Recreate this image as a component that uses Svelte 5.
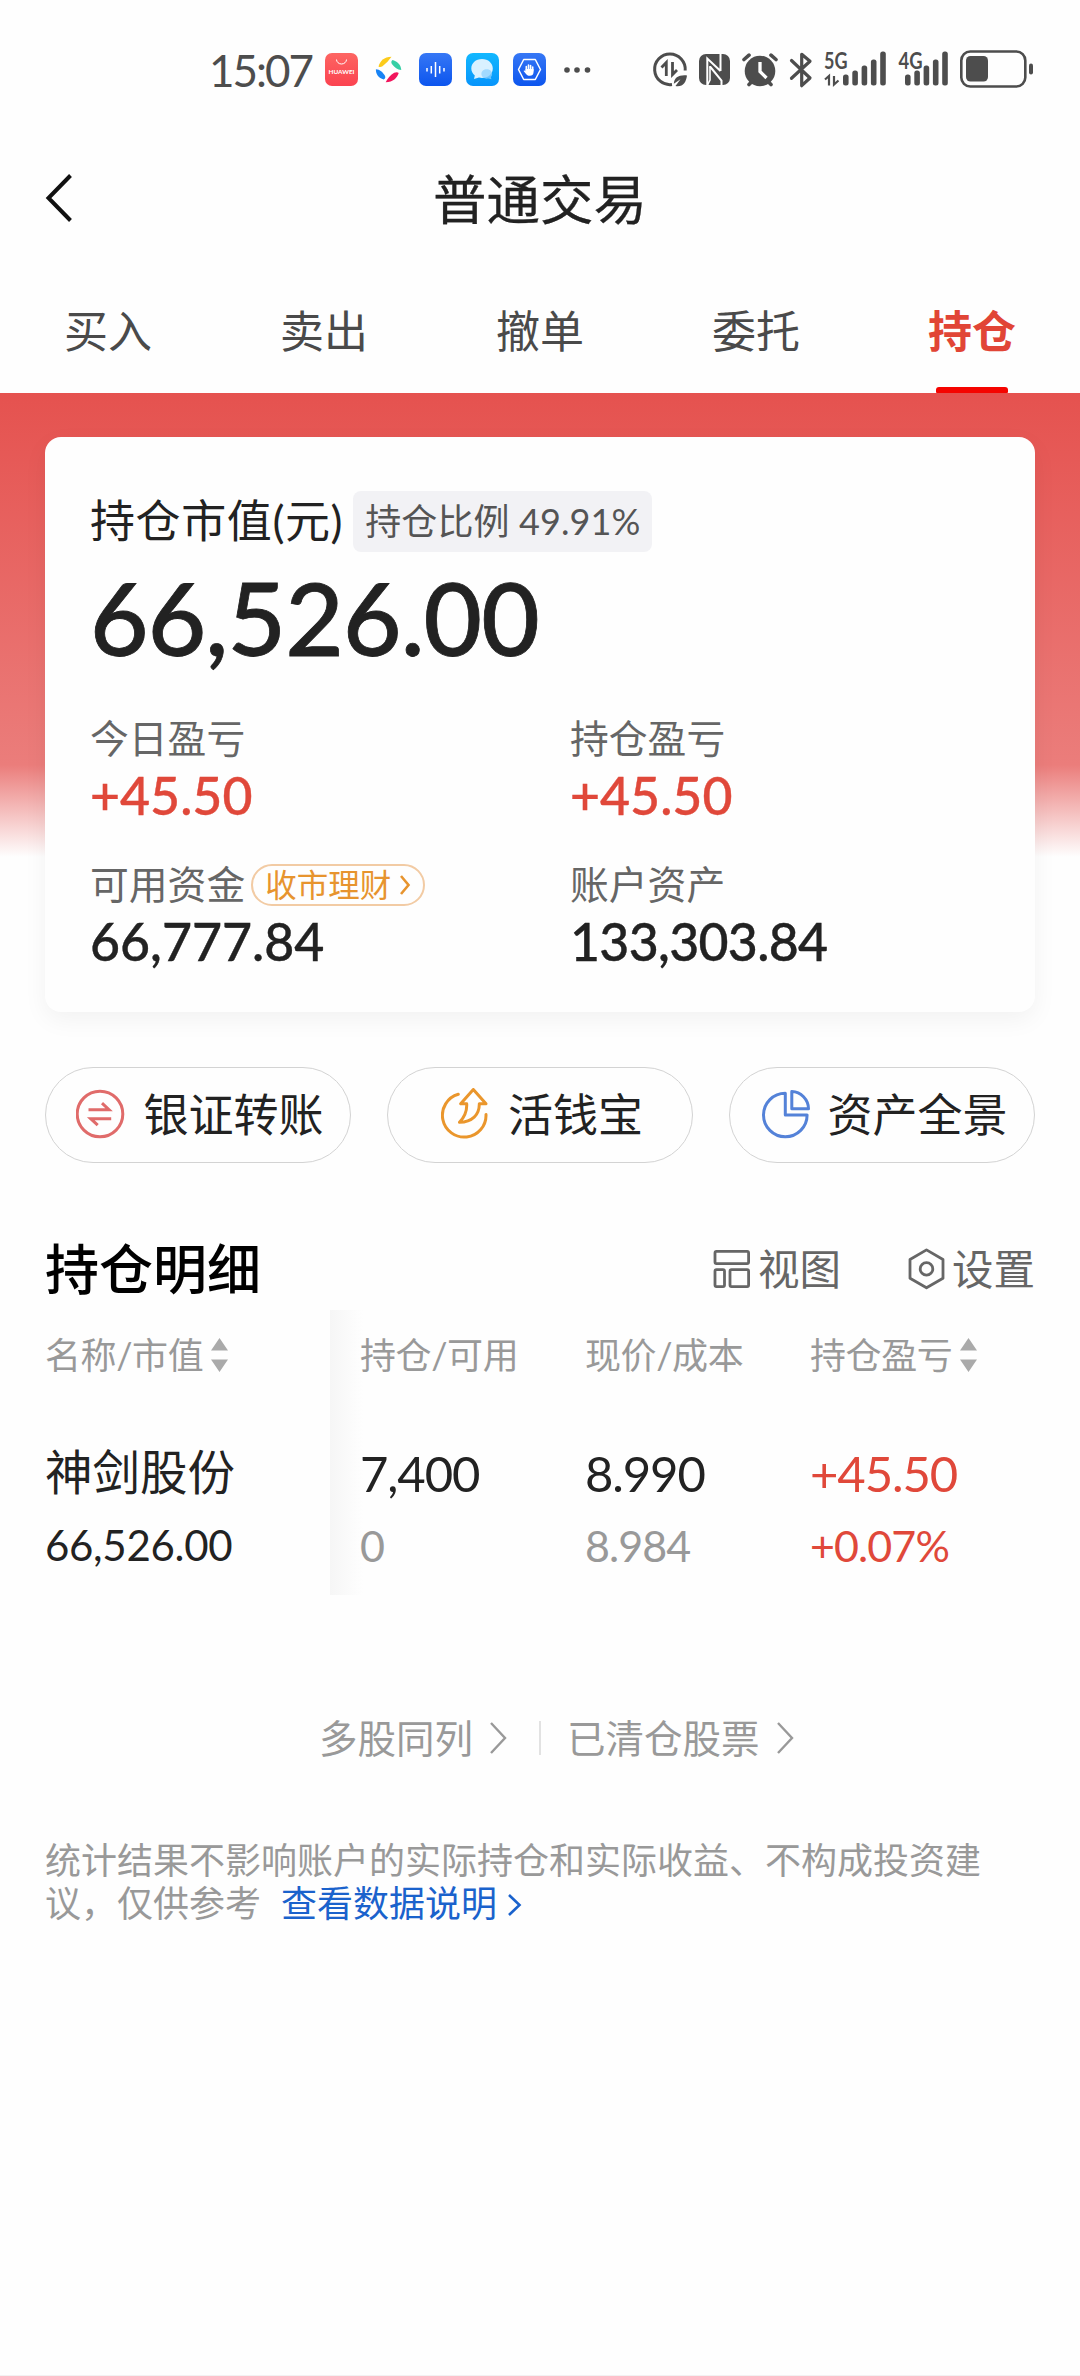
<script lang="ts">
  // Positions screen of the trading app: account summary card, quick actions
  // and the holdings table with its pinned first column.
  const tabs = ["买入", "卖出", "撤单", "委托", "持仓"];
  let active = $state("持仓");

  const signal5g = [11, 15, 20, 26, 34];
  const signal4g = [11, 15, 20, 26, 34];

  const holdings = [
    {
      name: "神剑股份",
      value: "66,526.00",
      held: "7,400",
      available: "0",
      price: "8.990",
      cost: "8.984",
      profit: "+45.50",
      ratio: "+0.07%",
    },
  ];
</script>

{#snippet sorter()}
  <svg class="sorter" width="20" height="34" viewBox="0 0 20 34">
    <path d="M9.500 0 18 12.500H1z M9.500 34 1 21.500h17z" fill="#aaa" />
  </svg>
{/snippet}

<div class="screen">
  <div class="status">
    <span class="clock">15:07</span>
    <div class="apps">
      <svg width="33" height="33" viewBox="0 0 33 33">
        <defs>
          <linearGradient id="store" x2="0" y2="1">
            <stop stop-color="#fd6562" />
            <stop offset="1" stop-color="#fb4350" />
          </linearGradient>
        </defs>
        <rect width="33" height="33" rx="7" fill="url(#store)" />
        <path d="M11.500 6.500a5 4.500 0 0 0 10 0" fill="none" stroke="#fff" stroke-width="1" />
        <text x="16.500" y="21" text-anchor="middle" textLength="26" lengthAdjust="spacingAndGlyphs" font-size="5.500" font-weight="700" fill="#fff">HUAWEI</text>
      </svg>
      <svg width="33" height="33" viewBox="0 0 33 33">
        <path d="M6.500 13.500C8 8 12 4 19.500 3.800l-4 5-5 4.500c-1.500 1-3 1-4 .2z" fill="#fccb1b" />
        <path d="M20.500 7c4 1 8.500 4 8.800 10-3.800-.2-6.800-2.400-9-5.400-1.400-1.800-1.300-3.600.2-4.600z" fill="#36cfa5" />
        <path d="M26.700 20c-1.500 5-5.700 9-13 9.300 1.500-3.500 4.300-7 8.500-9.500 1.800-.9 3.500-.9 4.500.2z" fill="#f2155c" />
        <path d="M3.900 16.200c4 0 7 3.200 8.800 6 1.200 2 .6 3.600-1 4.200-5-1.500-8-5.200-7.800-10.200z" fill="#1783f5" />
      </svg>
      <svg width="33" height="33" viewBox="0 0 33 33">
        <defs>
          <linearGradient id="blue" x2="0" y2="1">
            <stop stop-color="#3677f5" />
            <stop offset="1" stop-color="#0c55ee" />
          </linearGradient>
        </defs>
        <rect width="33" height="33" rx="7" fill="url(#blue)" />
        <path d="M8 15v3.500M12.300 13v7.500M16.500 9v15M20.700 13v7.500M25 15v3.500" stroke="#fff" stroke-width="1.500" />
      </svg>
      <svg width="33" height="33" viewBox="0 0 33 33">
        <defs>
          <linearGradient id="cyan" x2="0" y2="1">
            <stop stop-color="#12b8ff" />
            <stop offset="1" stop-color="#0794fb" />
          </linearGradient>
        </defs>
        <rect width="33" height="33" rx="7" fill="url(#cyan)" />
        <path d="M16 6c6.300 0 10.800 4.200 10.800 9.500S22.300 25 16 25c-1 0-2-.1-3-.4L8 26l.8-3.500C6.600 20.700 5.300 18.300 5.300 15.500 5.300 10.200 9.700 6 16 6z" fill="#d9f1ff" />
        <path d="M20.700 16.300c3 0 5.400 2 5.400 4.700 0 1.200-.5 2.300-1.300 3.100l.6 2.200-3-.8c-4 .8-7-1.500-7-4.500 0-2.700 2.400-4.700 5.300-4.700z" fill="#8fd2ff" opacity=".75" />
      </svg>
      <svg width="33" height="33" viewBox="0 0 33 33">
        <rect width="33" height="33" rx="7" fill="url(#blue)" />
        <path d="M10.700 6.500h11.600L27.500 16.500l-5.200 10H10.700l-5.200-10z" fill="none" stroke="#fff" stroke-width="1.500" stroke-linejoin="round" />
        <path d="M13.300 18v-4.500M15.500 17v-5M17.600 17v-4.500M19.700 18v-4" stroke="#fff" stroke-width="1.600" stroke-linecap="round" />
        <path d="M12.600 16h7.900v3.500c0 2-1.500 3.300-3.700 3.300-2 0-3-.8-4.200-2.300l-2-2.500c.7-.7 1.300-.5 2 .3z" fill="#fff" />
      </svg>
    </div>
    <svg class="more" width="28" height="8" viewBox="0 0 28 8" fill="#4d4d4d">
      <circle cx="4" cy="4" r="2.800" />
      <circle cx="14" cy="4" r="2.800" />
      <circle cx="24.500" cy="4" r="2.800" />
    </svg>

    <svg class="system" width="384" height="60" viewBox="0 -10 384 60" fill="#4d4d4d">
      <!-- data saver -->
      <g transform="translate(3 3)">
        <path d="M19 31.500A15.300 15.300 0 1 1 32.200 17.500" fill="none" stroke="#4d4d4d" stroke-width="3" />
        <path d="m8.500 14.500 4.800-5V23M19.500 9v12.500l4.500-4.500" fill="none" stroke="#4d4d4d" stroke-width="2.800" />
        <path d="M34 22.500c-8-.8-12.800 2-13.200 8.300l6.700-4.500-5 6.700c7.500 1.200 10.500-3.500 11.500-10.500z" />
      </g>
      <!-- NFC -->
      <g transform="translate(49 4)">
        <rect width="31" height="31" rx="7" />
        <path d="M8.300 31V4.500L21.500 17M21.500 0v17M11 12.500 22.500 26.500V31" fill="none" stroke="#fff" stroke-width="2" />
        <path d="M11 12v14l-2.500 5" fill="none" stroke="#fff" stroke-width="1.600" />
      </g>
      <!-- alarm -->
      <g transform="translate(92 3)">
        <circle cx="18" cy="18" r="15.300" />
        <path d="m2 6.500 5-4.300M34 6.500l-5-4.300M7 31.500l4-4M29 31.500l-4-4" fill="none" stroke="#4d4d4d" stroke-width="3.600" stroke-linecap="round" />
        <path d="M18 9v9.500l6.500 6.500" fill="none" stroke="#fff" stroke-width="3.300" />
      </g>
      <!-- bluetooth -->
      <path d="m141.500 10.500 18.500 17.500-8.300 7.700V4.300l8.300 7-18.500 17" fill="none" stroke="#4d4d4d" stroke-width="3.200" stroke-linecap="round" stroke-linejoin="round" />
      <!-- 5G and 4G -->
      <text x="174" y="18.800" font-size="22" font-weight="700" textLength="23.500" lengthAdjust="spacingAndGlyphs">5G</text>
      <path d="m175 29.500 4-3.500v9.500M184 26v8.500l4.500-4" fill="none" stroke="#4d4d4d" stroke-width="2.200" />
      {#each signal5g as h, i}
        <rect x={193 + i * 9.300} y={35.500 - h} width="5.600" height={h} rx="2.500" />
      {/each}
      <text x="248.500" y="18.800" font-size="22" font-weight="700" textLength="24" lengthAdjust="spacingAndGlyphs">4G</text>
      {#each signal4g as h, i}
        <rect x={255 + i * 9.300} y={35.500 - h} width="5.600" height={h} rx="2.500" />
      {/each}
      <!-- battery -->
      <rect x="311.300" y="1.500" width="64" height="35" rx="9" fill="none" stroke="#4d4d4d" stroke-width="2.600" />
      <rect x="316" y="6" width="22" height="25.500" rx="4.500" />
      <rect x="379" y="13.500" width="4" height="11" rx="2" />
    </svg>
  </div>

  <header class="title">
    <svg class="back" width="28" height="50" viewBox="0 0 28 50">
      <path d="M26.500 1.500 4.500 24 26.500 46.500" fill="none" stroke="#111" stroke-width="4" />
    </svg>
    <h1>普通交易</h1>
  </header>

  <nav class="tabs">
    {#each tabs as tab}
      <button class="tab" class:tab--active={tab === active} onclick={() => (active = tab)}>
        <span>{tab}</span>
      </button>
    {/each}
  </nav>

  <main>
    <section class="hero">
      <div class="card">
        <div class="card__head">
          <span>持仓市值(元)</span>
          <span class="badge">持仓比例 49.91%</span>
        </div>
        <div class="total">66,526.00</div>
        <div class="stats">
          <div class="stat">
            <div class="stat__label">今日盈亏</div>
            <div class="stat__value up">+45.50</div>
          </div>
          <div class="stat">
            <div class="stat__label">持仓盈亏</div>
            <div class="stat__value up">+45.50</div>
          </div>
          <div class="stat">
            <div class="stat__label">
              可用资金
              <span class="pill">
                收市理财
                <svg width="12" height="22" viewBox="0 0 12 22">
                  <path d="m2 2 7.500 9L2 20" fill="none" stroke="#e7942e" stroke-width="2.600" />
                </svg>
              </span>
            </div>
            <div class="stat__value">66,777.84</div>
          </div>
          <div class="stat">
            <div class="stat__label">账户资产</div>
            <div class="stat__value stat__value--long">133,303.84</div>
          </div>
        </div>
      </div>
    </section>

    <div class="actions">
      <button class="action">
        <svg width="50" height="54" viewBox="0 0 50 54" fill="none" stroke="#e06b6a" stroke-width="3">
          <circle cx="24" cy="26" r="22.800" />
          <path d="M12.500 21.700h20.500l-7-6.500M35.200 30.700H14.700l7 6.500" />
        </svg>
        银证转账
      </button>
      <button class="action">
        <svg width="50" height="54" viewBox="0 0 50 54" fill="none" stroke="#ea962c" stroke-width="3" stroke-linecap="round" stroke-linejoin="round">
          <path d="M17.300 6.300A21.800 21.800 0 1 0 45 26.500" />
          <path d="M32.300 1.500 19.700 15.800h6c.4 7-2 13-7.200 18.500C31 34 38.500 27 38.300 15.800H45z" />
        </svg>
        活钱宝
      </button>
      <button class="action">
        <svg width="50" height="54" viewBox="0 0 50 54" fill="none" stroke="#5482d8" stroke-width="3" stroke-linejoin="round">
          <path d="M25.300 5.200V27h21.800A21.800 21.800 0 1 1 25.300 5.200z" />
          <path d="M31.800 3.600V20.700H48.500C48.300 11.500 41 3.800 31.800 3.600z" />
        </svg>
        资产全景
      </button>
    </div>

    <div class="section-head">
      <h2>持仓明细</h2>
      <span class="tool">
        <svg width="38" height="40" viewBox="0 0 38 40" fill="none" stroke="#666" stroke-width="2.800">
          <rect x="2" y="2.400" width="33.600" height="12.200" rx="1.500" />
          <rect x="2" y="20.700" width="9.500" height="16.900" rx="1.500" />
          <rect x="17" y="20.700" width="18.600" height="16.900" rx="1.500" />
        </svg>
        视图
      </span>
      <span class="tool tool--settings">
        <svg width="38" height="42" viewBox="0 0 38 42" fill="none" stroke="#666" stroke-width="2.800">
          <path d="M19.500 1.900 36 11.500v18.800L19.500 39.800 3 30.300V11.500z" stroke-linejoin="round" />
          <circle cx="19.500" cy="20.900" r="6.300" />
        </svg>
        设置
      </span>
    </div>

    <div class="table">
      <div class="table__pinned">
        <div class="th">名称/市值{@render sorter()}</div>
        {#each holdings as row}
          <div class="cell name">{row.name}</div>
          <div class="cell cell--sub dark">{row.value}</div>
        {/each}
      </div>
      <div class="table__scroll">
        <div class="th">持仓/可用</div>
        <div class="th">现价/成本</div>
        <div class="th">持仓盈亏{@render sorter()}</div>
        {#each holdings as row}
          <div>
            <div class="cell">{row.held}</div>
            <div class="cell cell--sub">{row.available}</div>
          </div>
          <div>
            <div class="cell">{row.price}</div>
            <div class="cell cell--sub">{row.cost}</div>
          </div>
          <div>
            <div class="cell up">{row.profit}</div>
            <div class="cell cell--sub up">{row.ratio}</div>
          </div>
        {/each}
      </div>
    </div>

    <div class="links">
      <span>多股同列</span>
      <svg width="18" height="34" viewBox="0 0 18 34">
        <path d="M2 2 16 17 2 32" fill="none" stroke="#999" stroke-width="2.400" />
      </svg>
      <i class="divider"></i>
      <span>已清仓股票</span>
      <svg width="18" height="34" viewBox="0 0 18 34">
        <path d="M2 2 16 17 2 32" fill="none" stroke="#999" stroke-width="2.400" />
      </svg>
    </div>

    <p class="note">
      统计结果不影响账户的实际持仓和实际收益、不构成投资建议，仅供参考<span class="note__link">查看数据说明<svg width="16" height="24" viewBox="0 0 16 24"><path d="m2 2 10.500 10L2 22" fill="none" stroke="#1a62cc" stroke-width="2.600" /></svg></span>
    </p>
  </main>
</div>

<style>
  :global(body) {
    background: #fefefe;
  }

  .screen {
    display: flex;
    flex-direction: column;
    box-sizing: border-box;
    width: 1080px;
    height: 2376px;
    overflow: hidden;
    border-bottom: 1px solid #f2f2f2;
    background: #fefefe;
    color: #222;
    font-family: Lato, "Noto Sans CJK SC", sans-serif;
  }

  svg {
    display: block;
    flex: none;
  }

  button {
    padding: 0;
    border: 0;
    background: none;
    color: inherit;
    font: inherit;
  }

  .status {
    display: flex;
    align-items: center;
    height: 139px;
    padding-left: 209px;
  }

  .clock {
    width: 116px;
    color: #4d4d4d;
    font-size: 44px;
    letter-spacing: -2px;
    line-height: 60px;
    white-space: nowrap;
  }

  .apps {
    display: flex;
    gap: 14px;
  }

  .more {
    margin-left: 17px;
  }

  .system {
    margin-left: 59px;
  }

  .title {
    display: grid;
    grid-template-columns: 80px 1fr 80px;
    align-items: center;
    height: 120px;
  }

  .back {
    margin-left: 44px;
  }

  h1 {
    margin: 0;
    font-size: 53.500px;
    font-weight: 400;
    line-height: 80px;
    text-align: center;
    -webkit-text-stroke: 0.300px currentColor;
  }

  .tabs {
    display: flex;
    height: 134px;
  }

  .tab {
    display: flex;
    flex: 1;
    flex-direction: column;
    align-items: center;
    justify-content: space-between;
    color: #4a4a4a;
    font-size: 44px;
    line-height: 60px;
  }

  .tab span {
    margin-top: 42px;
  }

  .tab--active {
    color: #e14536;
    font-weight: 700;
  }

  .tab--active::after {
    width: 72px;
    height: 6px;
    border-radius: 3px 3px 1px 1px;
    background: #f50400;
    content: "";
  }

  .hero {
    padding: 44px 45px 0;
    background: linear-gradient(#e5524f 0, #eb7d7b 372px, #fefefe 464px) no-repeat;
  }

  .card {
    box-sizing: border-box;
    height: 575px;
    padding: 54px 45px 0;
    border-radius: 16px;
    background: #fefefe;
    box-shadow: 0 8px 24px rgb(0 0 0 / 5%);
  }

  .card__head {
    display: flex;
    align-items: center;
    gap: 10px;
    height: 61px;
    font-size: 45px;
    letter-spacing: 0.600px;
    line-height: 61px;
  }

  .badge {
    padding: 0 12px;
    border-radius: 8px;
    background: #f2f2f5;
    color: #555;
    font-size: 36px;
    letter-spacing: 0.100px;
  }

  .total {
    height: 133px;
    font-size: 101px;
    font-weight: 500;
    letter-spacing: -0.900px;
    line-height: 130px;
    -webkit-text-stroke: 0.800px currentColor;
  }

  .stats {
    display: grid;
    grid-template-columns: 480px 1fr;
    row-gap: 32px;
    margin-top: 25px;
    line-height: 57px;
  }

  .stat__label {
    display: flex;
    align-items: center;
    gap: 6px;
    height: 57px;
    color: #666;
    font-size: 38.800px;
  }

  .stat__value {
    font-size: 51.800px;
    font-weight: 500;
    -webkit-text-stroke: 0.400px currentColor;
  }

  .stat__value--long {
    letter-spacing: -0.700px;
  }

  .up,
  .cell.up {
    color: #e0483a;
  }

  .pill {
    display: flex;
    align-items: center;
    gap: 8px;
    box-sizing: border-box;
    height: 42px;
    padding: 0 12px;
    border: 2px solid #f2cba4;
    border-radius: 21px;
    color: #e7942e;
    font-size: 31.500px;
    line-height: 38px;
  }

  .actions {
    display: flex;
    gap: 36px;
    margin: 55px 45px 0;
  }

  .action {
    display: flex;
    flex: 1;
    align-items: center;
    justify-content: center;
    gap: 17px;
    box-sizing: border-box;
    height: 96px;
    padding-left: 4px;
    border: 1px solid #d3d3d3;
    border-radius: 48px;
    font-size: 45px;
    line-height: 60px;
  }

  .section-head {
    display: flex;
    align-items: center;
    height: 82px;
    margin: 65px 45px 0;
  }

  h2 {
    flex: 1;
    margin: 2px 0 0;
    color: #000;
    font-size: 54px;
    font-weight: 500;
    line-height: 72px;
  }

  .tool {
    display: flex;
    align-items: center;
    gap: 7px;
    color: #666;
    font-size: 41.500px;
    line-height: 60px;
  }

  .tool--settings {
    margin-left: 66px;
  }

  .table {
    display: flex;
    height: 285px;
  }

  .table__pinned {
    box-sizing: border-box;
    width: 330px;
    padding-left: 45px;
  }

  /* The pinned column casts a soft edge over the scrolling ones. */
  .table__scroll {
    display: grid;
    flex: 1;
    grid-template-columns: repeat(3, 225px);
    align-content: start;
    padding-left: 30px;
    background: linear-gradient(90deg, #f6f6f6, #fefefe) no-repeat 0 0 / 33px 100%;
  }

  .th {
    display: flex;
    align-items: center;
    height: 90px;
    margin-bottom: 37px;
    color: #999;
    font-size: 36px;
    letter-spacing: -0.400px;
    line-height: 90px;
  }

  .sorter {
    margin-left: 7px;
  }

  .cell {
    height: 72px;
    color: #222;
    font-size: 49px;
    letter-spacing: -1.100px;
    line-height: 72px;
  }

  .cell.name {
    font-size: 47.500px;
    letter-spacing: 0;
    line-height: 70px;
  }

  .cell--sub {
    color: #999;
    font-size: 43px;
    letter-spacing: -0.900px;
    line-height: 74px;
  }

  .cell--sub.dark {
    color: #222;
    font-size: 42px;
    letter-spacing: -0.300px;
    line-height: 72px;
  }

  .links {
    display: flex;
    align-items: center;
    height: 60px;
    margin: 113px 0 0 319px;
    color: #999;
    font-size: 38.500px;
    line-height: 60px;
  }

  .links svg {
    margin-left: 16px;
  }

  .divider {
    width: 2px;
    height: 34px;
    margin: 0 26px 0 32px;
    background: #e2e2e2;
  }

  .note {
    width: 945px;
    margin: 71px 45px 0;
    color: #999;
    font-size: 36px;
    line-height: 43px;
  }

  .note__link {
    margin-left: 20px;
    color: #1a62cc;
  }

  .note__link svg {
    display: inline-block;
    margin-left: 10px;
    vertical-align: 0;
  }
</style>
